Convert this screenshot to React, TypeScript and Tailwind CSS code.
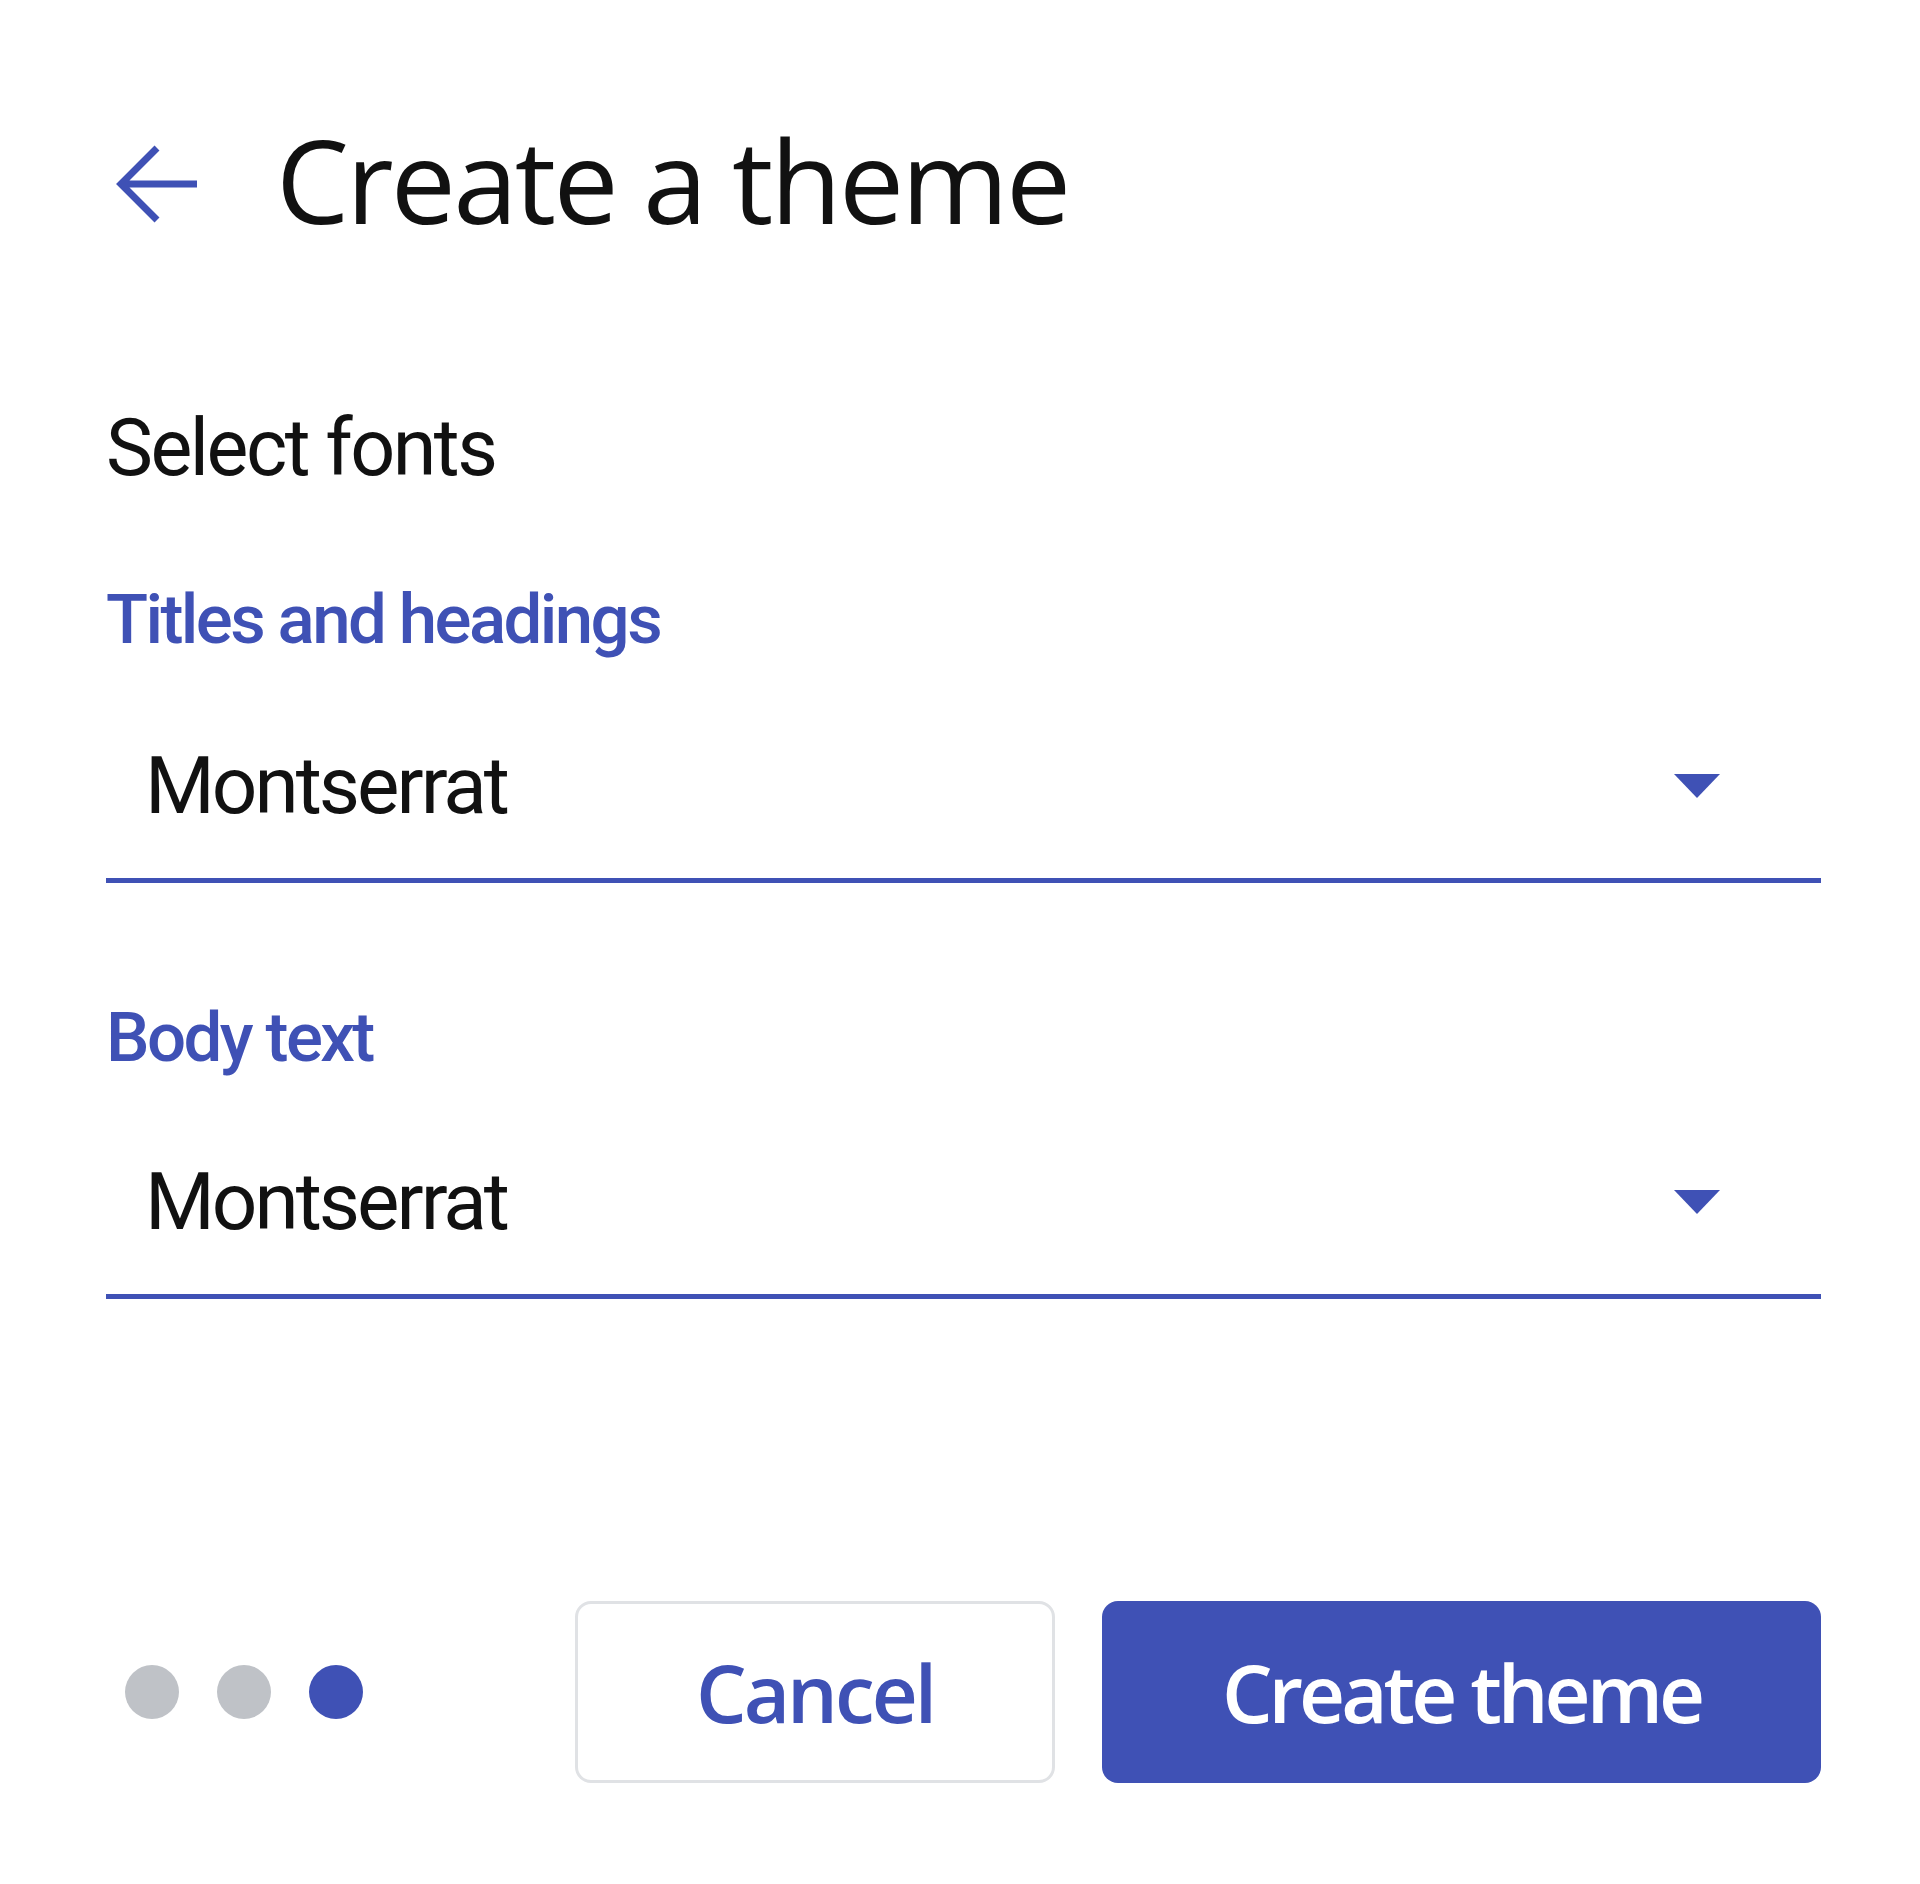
import React from 'react';

const Caret: React.FC = () => (
  <svg width="46" height="24" viewBox="0 0 46 24" className="shrink-0">
    <path d="M0 0H46L23 24Z" fill="#3f51b5" />
  </svg>
);

const FontSelect: React.FC<{ label: string; value: string; labelGap: string }> = ({ label, value, labelGap }) => (
  <div>
    <div className="font-['Roboto',sans-serif] font-medium text-[69px] leading-none tracking-[-2.6px] text-[#3f51b5]">
      {label}
    </div>
    <div className={`flex items-center justify-between border-b-[5px] border-[#3f51b5] pl-[39px] pr-[101px] pb-[52px] ${labelGap}`}>
      <span className="font-['Roboto',sans-serif] text-[80px] leading-none tracking-[-3px] text-[#111]">{value}</span>
      <Caret />
    </div>
  </div>
);

export default function App() {
  return (
    <div className="w-[1920px] h-[1884px] bg-white pl-[106px] pr-[99px] pt-[121px]">
      {/* Header */}
      <div className="flex items-start">
        <svg width="84" height="82" viewBox="0 0 84 82" className="ml-[9px] mt-[22px] shrink-0">
          <path d="M82 41H6 M42 5L6 41L42 77" fill="none" stroke="#3f51b5" strokeWidth="7" />
        </svg>
        <h1 className="ml-[77px] font-['Open_Sans',sans-serif] text-[116px] leading-none tracking-[-2.8px] text-[#111]">
          Create a theme
        </h1>
      </div>

      <div className="mt-[172px] font-['Roboto',sans-serif] text-[79px] leading-none tracking-[-2.5px] text-[#111]">
        Select fonts
      </div>

      <div className="mt-[97px]">
        <FontSelect label="Titles and headings" value="Montserrat" labelGap="mt-[92px]" />
      </div>

      <div className="mt-[120px]">
        <FontSelect label="Body text" value="Montserrat" labelGap="mt-[90px]" />
      </div>

      {/* Footer */}
      <div className="mt-[302px] flex items-center">
        <div className="ml-[19px] flex items-center gap-[38px]">
          <span className="w-[54px] h-[54px] rounded-full bg-[#bfc2c7]" />
          <span className="w-[54px] h-[54px] rounded-full bg-[#bfc2c7]" />
          <span className="w-[54px] h-[54px] rounded-full bg-[#3f51b5]" />
        </div>
        <div className="flex-1" />
        <div className="flex items-center gap-[47px]">
          <button className="w-[480px] h-[182px] rounded-[16px] border-[3px] border-[#e0e2e5] bg-white font-['Open_Sans',sans-serif] font-semibold text-[80px] leading-none tracking-[-3px] text-[#3f51b5]">
            Cancel
          </button>
          <button className="w-[719px] h-[182px] rounded-[16px] bg-[#3f51b5] font-['Open_Sans',sans-serif] font-semibold text-[80px] leading-none tracking-[-4px] text-white">
            Create theme
          </button>
        </div>
      </div>
    </div>
  );
}
